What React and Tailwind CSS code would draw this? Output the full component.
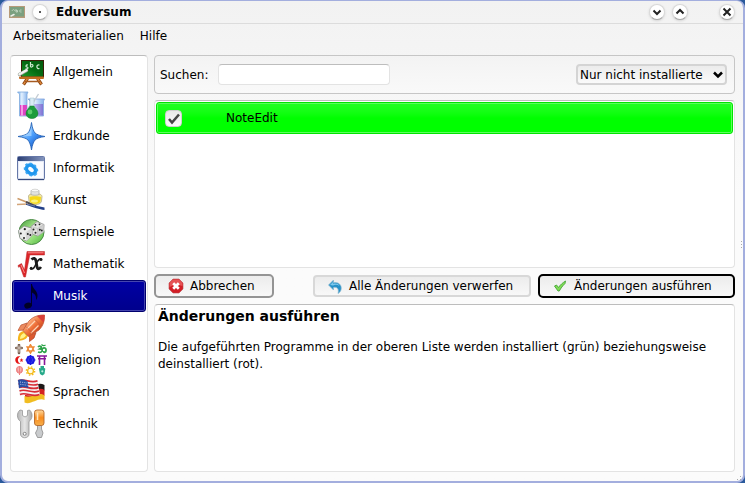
import React, { useState } from 'react';

function AppIcon({ className }) {
  return (
    <svg viewBox="0 0 18 16" className={className} aria-hidden="true">
      <rect x="1" y="2" width="16" height="12" fill="#b79a78" />
      <rect x="2" y="3" width="14" height="9.500" fill="#7ba07f" />
      <path d="M4 7 C5 5 6 5 7 7 M8 5 V8 H9.500 V6.500 H8 M13.500 6 C11 5.500 11 8.500 13.500 8" stroke="#c5d8c4" strokeWidth="0.900" fill="none" />
      <path d="M3 12 L6 10.500" stroke="#eeeeea" strokeWidth="1.500" strokeLinecap="round" />
    </svg>
  );
}

function BoardIcon({ className }) {
  return (
    <svg viewBox="0 0 32 32" className={className} aria-hidden="true">
      <defs>
        <linearGradient id="board" x1="0" y1="1" x2="1" y2="0">
          <stop offset="0" stopColor="#1c9a2a" />
          <stop offset="0.5" stopColor="#056b12" />
          <stop offset="1" stopColor="#035a0e" />
        </linearGradient>
      </defs>
      <path d="M12.500 22.500 L8.500 28.500 M22.500 22.500 L26.500 28.500" stroke="#8a4310" strokeWidth="3.200" fill="none" />
      <path d="M12.500 22.500 L8.700 28.200 M22.500 22.500 L26.300 28.200" stroke="#e08a3a" strokeWidth="1.500" fill="none" />
      <path d="M10 25.500 H25" stroke="#a65a20" strokeWidth="1.500" />
      <rect x="6" y="4" width="23" height="17.500" fill="#3b1d08" />
      <rect x="7" y="5" width="21" height="15.500" fill="url(#board)" />
      <rect x="4" y="20.500" width="25" height="2.500" rx="1" fill="#c06c20" />
      <g stroke="#cfe9d0" strokeWidth="1.200" fill="none">
        <path d="M13 9 C10.500 8.500 10.500 11 12 11 C13.800 11.200 13 13.500 10.500 12.800" />
        <path d="M15.500 6 V11 M15.500 9 C18.500 7 19 11.500 15.500 11" />
        <path d="M24.500 9 C21 8 21 13.500 24.500 12.500" />
      </g>
      <path d="M4.500 18.500 L11.500 14.500" stroke="#8b958b" strokeWidth="3.400" strokeLinecap="round" />
      <path d="M4.500 18.300 L11.500 14.300" stroke="#f4f5f2" strokeWidth="2.400" strokeLinecap="round" />
    </svg>
  );
}

function ChemistryIcon({ className }) {
  return (
    <svg viewBox="0 0 32 32" className={className} aria-hidden="true">
      <defs>
        <linearGradient id="glass" x1="0" y1="0" x2="1" y2="0">
          <stop offset="0" stopColor="#6aa4e4" />
          <stop offset="0.4" stopColor="#e2f0ff" />
          <stop offset="1" stopColor="#80aeea" />
        </linearGradient>
        <linearGradient id="violet" x1="0" y1="0" x2="1" y2="0">
          <stop offset="0" stopColor="#cfc8fa" />
          <stop offset="1" stopColor="#7f74d4" />
        </linearGradient>
      </defs>
      <path d="M2.500 4 H13 L12 6 V28 H4.500 V6 Z" fill="url(#glass)" stroke="#7ea9dd" strokeWidth="0.800" />
      <rect x="5" y="17" width="7" height="10.500" fill="#dd43c4" />
      <rect x="6" y="17" width="2" height="10.500" fill="#f59ae6" />
      <path d="M13 11 H29.500 L28.500 13 V28 H15 V13 Z" fill="url(#glass)" stroke="#83a5dd" strokeWidth="0.800" />
      <rect x="17" y="16" width="11" height="11.500" fill="url(#violet)" />
      <path d="M23.500 6 L18 15" stroke="#c3ccd4" strokeWidth="1.400" />
      <path d="M15 10 H19 V17 L22.500 22 H11.500 L15 17 Z" fill="#d9ecf5" stroke="#9dbccb" strokeWidth="0.500" />
      <path d="M15 18 H19 C20 20.500 23 22 23 25.500 C22.800 29 20 30.500 17 30.500 C14 30.500 11.200 29 11 25.500 C11 22 14 20.500 15 18 Z" fill="#1c9c3c" stroke="#0e7a2c" strokeWidth="0.500" />
      <circle cx="15" cy="24" r="2.400" fill="#6cd878" opacity="0.800" />
    </svg>
  );
}

function CompassIcon({ className }) {
  return (
    <svg viewBox="0 0 32 32" className={className} aria-hidden="true">
      <defs>
        <linearGradient id="star" x1="0" y1="0" x2="1" y2="1">
          <stop offset="0.200" stopColor="#9ad0ff" />
          <stop offset="0.500" stopColor="#4b9dfb" />
          <stop offset="0.800" stopColor="#1458c8" />
        </linearGradient>
      </defs>
      <path d="M16.500 2.500 C17.200 8 18.500 11 20 13 C22 14.800 25 15.800 30 16.500 C25 17.200 22 18.200 20 20 C18.500 22 17.200 25 16.500 30 C15.800 25 14.500 22 13 20 C11 18.200 8 17.200 3 16.500 C8 15.800 11 14.800 13 13 C14.500 11 15.800 8 16.500 2.500 Z" fill="url(#star)" stroke="#2a66b8" strokeWidth="0.900" />
      <path d="M16.500 6 C15.500 12 13 14.500 7 16.300 L16.500 16 Z" fill="#b9e0ff" opacity="0.600" />
    </svg>
  );
}

function ComputingIcon({ className }) {
  return (
    <svg viewBox="0 0 32 32" className={className} aria-hidden="true">
      <defs>
        <linearGradient id="titlebar" x1="0" y1="0" x2="1" y2="0">
          <stop offset="0" stopColor="#2c3f74" />
          <stop offset="1" stopColor="#8495bd" />
        </linearGradient>
      </defs>
      <rect x="2.500" y="4.500" width="27" height="23" rx="1" fill="#e4e9f6" stroke="#6678a8" />
      <rect x="3" y="5" width="26" height="4" fill="url(#titlebar)" />
      <rect x="4" y="10" width="24" height="16.500" fill="#fafbff" />
      <path d="M3 27.500 H29" stroke="#34477c" strokeWidth="1.300" />
      <g transform="rotate(40 16 17.500)">
        <ellipse cx="16" cy="17.500" rx="5" ry="3.800" fill="none" stroke="#1f96ee" strokeWidth="3.600" />
        <ellipse cx="16" cy="17.500" rx="7" ry="5.600" fill="none" stroke="#3ba6f4" strokeWidth="1.600" strokeDasharray="2.600 2.200" />
      </g>
    </svg>
  );
}

function ArtIcon({ className }) {
  return (
    <svg viewBox="0 0 32 32" className={className} aria-hidden="true">
      <path d="M13.500 12 C14 10 17 9.500 20.500 9.500 C24 9.500 27 10.500 27 12.500 L26.500 17 C26 20 23 20.500 20 20.500 C16.500 20.500 14 20 14 17 Z" fill="#f2e7a4" stroke="#b7ae83" strokeWidth="0.800" />
      <path d="M14.500 13 C17 12 23 12 26 13 L25.500 17 C25 19.500 22 19.800 20 19.800 C17 19.800 15 19 15 17 Z" fill="#f6d817" />
      <ellipse cx="19.500" cy="17" rx="3.500" ry="1.600" fill="#fdf37d" />
      <path d="M16 6.500 H24 V10.500 C22 11.500 18 11.500 16 10.500 Z" fill="#e2e3df" stroke="#a7a8a4" strokeWidth="0.700" />
      <ellipse cx="20" cy="6.500" rx="3.600" ry="1.300" fill="#f8f8f6" stroke="#b5b5b2" strokeWidth="0.500" />
      <path d="M2.500 14.500 L14 19" stroke="#cc9a68" strokeWidth="1.400" />
      <path d="M11 18 L21 22.500" stroke="#4a4a52" strokeWidth="2" />
      <path d="M2 20.500 L13 20" stroke="#d3a579" strokeWidth="1.400" />
      <path d="M11 19.500 L20 21.500 L29.500 23.500 L29.500 26 C24 25.500 19 23.500 11 20.800 Z" fill="#234089" />
      <path d="M12 20.200 L20 22" stroke="#8490b0" strokeWidth="0.800" />
    </svg>
  );
}

function DiceIcon({ className }) {
  return (
    <svg viewBox="0 0 32 32" className={className} aria-hidden="true">
      <defs>
        <linearGradient id="disc" x1="0" y1="0" x2="1" y2="1">
          <stop offset="0" stopColor="#3f9a36" />
          <stop offset="0.500" stopColor="#b4f096" />
          <stop offset="1" stopColor="#48b436" />
        </linearGradient>
      </defs>
      <circle cx="16.500" cy="16" r="12.500" fill="url(#disc)" stroke="#4a8a45" />
      <path d="M16 10.500 L22 5.500 L29 8.500 L28.500 16 L22.500 20 L16 17.500 Z" fill="#e2e2e0" stroke="#888" strokeWidth="0.700" />
      <path d="M16 10.500 L22.500 12.500 L22.500 20 L28.500 16 L29 8.500 L22.500 12.500" fill="#cfcfcf" stroke="#bbb" strokeWidth="0.600" />
      <path d="M3.500 14.500 L9 10 L16.500 12 L17.500 19 L11.500 25 L5 22.500 Z" fill="#ededec" stroke="#888" strokeWidth="0.700" />
      <path d="M10.500 16.500 L16.500 12 L17.500 19 L11.500 25 Z" fill="#d4d4d3" />
      <g fill="#222">
        <circle cx="9.800" cy="13.200" r="1.100" />
        <circle cx="5.800" cy="17.500" r="1" /><circle cx="9" cy="22" r="1" />
        <circle cx="12.800" cy="18" r="1" /><circle cx="15.300" cy="19" r="1" />
        <circle cx="20.500" cy="8.800" r="0.900" /><circle cx="24.500" cy="8.300" r="0.900" />
        <circle cx="18.500" cy="13.500" r="1" /><circle cx="20.500" cy="16.800" r="1" />
        <circle cx="24.800" cy="13.800" r="1" /><circle cx="26.800" cy="14.500" r="0.900" />
      </g>
    </svg>
  );
}

function MathIcon({ className }) {
  return (
    <svg viewBox="0 0 32 32" className={className} aria-hidden="true">
      <path d="M3 17.500 L6.500 15.500 L9.500 22 L12 3.500 H29.500 V7 H14.800 L10.500 29 H8.800 L5 18.500 L3.500 19.300 Z" fill="#dc2427" stroke="#b8282a" strokeWidth="0.500" />
      <path d="M12.800 4.800 H28.500 M6 17 L9.500 25" stroke="#fa8f8c" strokeWidth="1" fill="none" />
      <path d="M16.500 11.500 C18.500 9.500 20.500 10 21 13 L22 18.500 C22.500 21.500 24 21.500 26 19" stroke="#1b1b1b" strokeWidth="2.800" fill="none" />
      <path d="M26.500 11 C23.500 10 22.500 13.500 21 16 C19.500 19.500 18 22 15.500 20.500" stroke="#1b1b1b" strokeWidth="1.600" fill="none" />
      <circle cx="26" cy="11.500" r="1.500" fill="#1b1b1b" /><circle cx="16.200" cy="20.300" r="1.500" fill="#1b1b1b" />
    </svg>
  );
}

function NoteIcon({ className }) {
  return (
    <svg viewBox="0 0 32 32" className={className} aria-hidden="true">
      <ellipse cx="13" cy="25.600" rx="3.800" ry="2.900" transform="rotate(-18 13 25.600)" fill="#000026" />
      <path d="M16 4 H17 C17.500 9 23 11 22.500 16 C22.300 18 22 19 21 20 C21.500 15 19 13.500 17 12.500 V26 H16 Z" fill="#000026" />
    </svg>
  );
}

function RocketIcon({ className }) {
  return (
    <svg viewBox="0 0 32 32" className={className} aria-hidden="true">
      <defs>
        <linearGradient id="rocket" x1="0" y1="0" x2="1" y2="1">
          <stop offset="0.200" stopColor="#ffbd92" />
          <stop offset="0.500" stopColor="#f0743c" />
          <stop offset="0.800" stopColor="#c43a16" />
        </linearGradient>
      </defs>
      <path d="M3 29 C2.500 24 4 20 8.500 19 L13 24 C11 28 7 28.500 3 29 Z" fill="#f5b51c" />
      <path d="M5 27 C5 24 6.500 22 9 21 L11 23.500 C10 25.500 8 26.500 5 27 Z" fill="#fff58a" />
      <path d="M12 11 L6 13 L3 18.500 L9 18 Z" fill="#ec8a5e" stroke="#b9512e" strokeWidth="0.700" />
      <path d="M21 20.500 L19 26 L14.500 29.500 L14.500 23 Z" fill="#dc5a30" stroke="#ac3f20" strokeWidth="0.700" />
      <path d="M29.500 3 C29.500 9 28.500 13.500 24 18 L13.500 24.500 L8 18.500 L13.500 9.500 C18 4.500 23 3 29.500 3 Z" fill="url(#rocket)" stroke="#c05a36" strokeWidth="0.800" />
      <path d="M29.500 3 C29.500 6 29.300 8.500 28.500 10.500 L22 4 C24 3.200 26.500 3 29.500 3 Z" fill="#d8403a" />
      <path d="M12 17 L20 9 M16 21 L23.500 13.500" stroke="#ffd4b5" strokeWidth="1.300" />
      <path d="M20 7.500 L25.500 13.500 M11 14.500 L18 21.500" stroke="#c86040" strokeWidth="0.800" />
    </svg>
  );
}

function ReligionIcon({ className }) {
  return (
    <svg viewBox="0 0 32 32" className={className} aria-hidden="true">
      <path d="M4 1 V9 M1.300 4 H6.700" stroke="#776052" strokeWidth="2.600" strokeLinecap="round" />
      <path d="M4 1.500 V8.500 M1.500 4 H6.500" stroke="#e0d4cb" strokeWidth="0.900" />
      <path d="M15.500 0.500 L19 6.800 H12 Z M15.500 9.200 L12 3 H19 Z" fill="none" stroke="#ef8a35" strokeWidth="1.300" />
      <path d="M23 3 C25 1 28 3 25 4.800 C29 5 27 9.500 23 8 M27 5 C30 2.500 32 5 30.500 8 C29.500 9 28.500 8 28.500 7" stroke="#2ea34a" strokeWidth="1.700" fill="none" />
      <path d="M26.500 0.500 C28 2 29.500 2 30.500 0.800" stroke="#2ea34a" strokeWidth="1.200" fill="none" />
      <path d="M5.500 12.500 C-1.500 10.500 -1.500 21.500 5.500 19.500 C2 18.500 2 13.500 5.500 12.500 Z" fill="#e41616" />
      <path d="M6.500 14 L7 15.500 L8.500 15.500 L7.300 16.500 L7.800 18 L6.500 17.200 L5.200 18 L5.700 16.500 L4.600 15.500 L6 15.500 Z" fill="#e41616" />
      <circle cx="15.500" cy="16" r="3.600" fill="#5a5af4" stroke="#1717e0" strokeWidth="1.700" />
      <path d="M15.500 11 V21 M10.500 16 H20.500 M12.200 12.700 L18.800 19.300 M18.800 12.700 L12.200 19.300" stroke="#1717e0" strokeWidth="1.200" />
      <path d="M22 12 H32 M23 14.800 H31 M24.500 12 V21 M29.500 12 V21" stroke="#8a1799" strokeWidth="1.600" />
      <circle cx="4.500" cy="25.500" r="3" fill="#f6b0b0" stroke="#ee7f7f" strokeWidth="1" />
      <path d="M4.500 22 V31 M2 24.500 V28 C2.500 29.500 6.500 29.500 7 28 V24.500" stroke="#ee7f7f" strokeWidth="1" fill="none" />
      <circle cx="15.500" cy="27" r="2.900" fill="#fffbe6" stroke="#f3ba18" strokeWidth="1.300" />
      <circle cx="15.500" cy="27" r="4.200" fill="none" stroke="#f3ba18" strokeWidth="1.300" strokeDasharray="1.500 1.800" />
      <path d="M24 25 C24 23.500 25.300 23.800 25.500 24.500 V22 H29 V24.500 C29.500 23.500 30.500 24 30.200 25.500 L29.500 30 L27.300 31.500 L25 30 Z" fill="#27a98a" />
      <circle cx="27.300" cy="27.300" r="1.100" fill="#bff0e0" />
    </svg>
  );
}

function FlagsIcon({ className }) {
  return (
    <svg viewBox="0 0 32 32" className={className} aria-hidden="true">
      <path d="M10 10 C17 13 22 5 29.500 9 V14.500 C23 11 17 18 10 16 Z" fill="#1d1918" />
      <path d="M10 15 C17 18 23 10 29.500 14 V20 C23 17 16 24 10 21 Z" fill="#d32323" />
      <path d="M9.500 20 C17 23 23 15 29.500 19.500 V24 C23 21 16 29.500 9.500 26.500 Z" fill="#f1bd21" />
      <path d="M3 4.500 C10 1.500 15 8 22.500 4.500 L25 19 C17 22 12 16.500 5 20.500 Z" fill="#f5f2f2" />
      <g stroke="#d92d36" strokeWidth="1.700" fill="none">
        <path d="M3 4.800 C10 1.800 15 8 22.500 4.800" />
        <path d="M3.500 8.200 C10 5.200 15.500 11.400 23 8.200" />
        <path d="M4 11.600 C10 8.600 16 14.800 23.500 11.600" />
        <path d="M4.500 15 C11 12 16.500 18.200 24 15" />
        <path d="M5 18.500 C11 15.500 17 21.700 24.500 18.500" />
      </g>
      <path d="M3 4 C7 2.300 9.500 3.800 12.500 5 L13.500 12 C10 11 7.500 10.500 4 12.300 Z" fill="#284ea5" />
      <path d="M5 6 L12 7 M5.300 8.300 L12.500 9.300" stroke="#c9d8f6" strokeWidth="0.900" strokeDasharray="1 1.200" />
    </svg>
  );
}

function ToolsIcon({ className }) {
  return (
    <svg viewBox="0 0 32 32" className={className} aria-hidden="true">
      <defs>
        <linearGradient id="steel" x1="0" y1="0" x2="1" y2="0">
          <stop offset="0" stopColor="#b4b4b4" />
          <stop offset="0.500" stopColor="#e6e6e6" />
          <stop offset="1" stopColor="#a8a8a8" />
        </linearGradient>
        <linearGradient id="handle" x1="0" y1="0" x2="0" y2="1">
          <stop offset="0" stopColor="#ffdaa0" />
          <stop offset="0.500" stopColor="#f88c1e" />
          <stop offset="1" stopColor="#f6b04d" />
        </linearGradient>
      </defs>
      <path d="M5 2 C1.500 5 1.500 10.500 5.500 13.500 V26 C5.500 31 14 31 14 26 V13.500 C18 10.500 18 5 14.500 2 L12.500 2.500 V7.500 L10 9 L7.500 7.500 V2.500 Z" fill="url(#steel)" stroke="#959595" strokeWidth="0.800" />
      <circle cx="9.700" cy="25.800" r="1.500" fill="#fff" stroke="#777" strokeWidth="0.900" />
      <path d="M22.500 17 H26.500 V21 L28 25 L26.500 29.500 H22.500 L20.500 25 L22.500 21 Z" fill="#c9cbcd" stroke="#8a8a8a" strokeWidth="0.800" />
      <rect x="19.500" y="2" width="9.500" height="15.500" rx="2.500" fill="url(#handle)" stroke="#b3662a" strokeWidth="0.900" />
      <path d="M22.500 4.500 V12" stroke="#ffe5bd" strokeWidth="1.600" />
    </svg>
  );
}

const categories = [
  ['Allgemein', BoardIcon],
  ['Chemie', ChemistryIcon],
  ['Erdkunde', CompassIcon],
  ['Informatik', ComputingIcon],
  ['Kunst', ArtIcon],
  ['Lernspiele', DiceIcon],
  ['Mathematik', MathIcon],
  ['Musik', NoteIcon],
  ['Physik', RocketIcon],
  ['Religion', ReligionIcon],
  ['Sprachen', FlagsIcon],
  ['Technik', ToolsIcon],
];

function TitleButton({ label, children }) {
  return (
    <button type="button" aria-label={label} className="flex size-4 items-center justify-center rounded-full border border-[#d9d9d9] border-b-[#a8a8a8] bg-white shadow-sm">
      <svg viewBox="0 0 10 10" className="size-2.5" fill="none" stroke="#222" strokeWidth="2" aria-hidden="true">{children}</svg>
    </button>
  );
}

function TitleBar() {
  return (
    <header className="flex h-[23px] items-center border-b border-[#dcdcdc] pr-2 pl-1.5">
      <AppIcon className="h-4 w-[18px]" />
      <span className="ml-1.5 flex">
        <TitleButton label="Fenstermenü">
          <circle cx="5" cy="5" r="1" fill="#222" stroke="none" />
        </TitleButton>
      </span>
      <h1 className="ml-2 text-[12px] font-bold">Eduversum</h1>
      <div className="ml-auto flex gap-[7px]">
        <TitleButton label="Minimieren"><path d="M1.500 3.500 L5 7 L8.500 3.500" /></TitleButton>
        <TitleButton label="Maximieren"><path d="M1.500 6.500 L5 3 L8.500 6.500" /></TitleButton>
        <span className="ml-6 flex">
          <TitleButton label="Schließen"><path d="M1.500 1.500 L8.500 8.500 M8.500 1.500 L1.500 8.500" /></TitleButton>
        </span>
      </div>
    </header>
  );
}

const sunken = 'rounded-[4px] border border-[#e3e3e3] border-t-[#bdbdbd] bg-white';
const raised = 'flex items-center gap-1.5 bg-gradient-to-b from-[#ececec] to-[#f8f8f8] pl-3';

export default function App() {
  const [selected, setSelected] = useState('Musik');
  const [checked, setChecked] = useState(true);
  return (
    <div className="min-h-screen bg-[#2a5a9c]">
      <div className="relative flex min-h-screen flex-col rounded-lg border-x-2 border-t border-b-2 border-[#a3aede] bg-gradient-to-b from-[#f2f2f2] to-[#fbfbfb] to-40% font-['DejaVu_Sans',sans-serif] text-[12px] text-black">
        <TitleBar />
        <nav className="flex h-[31px] items-center gap-4 px-[11px] pb-2">
          <button type="button">Arbeitsmaterialien</button>
          <button type="button">Hilfe</button>
        </nav>
        <main className="flex flex-1 gap-1.5 pr-2 pb-[9px] pl-2">
          <ul className={`w-[138px] shrink-0 px-px ${sunken}`}>
            {categories.map(([name, Icon]) => (
              <li key={name}>
                <button
                  type="button"
                  onClick={() => setSelected(name)}
                  className={
                    name === selected
                      ? 'flex h-8 w-full items-center gap-1.5 rounded-[3px] border border-[#00006e] bg-gradient-to-b from-[#0000a4] to-[#00008c] pl-0.5 text-white inset-ring inset-ring-[#4545ae]'
                      : 'flex h-8 w-full items-center gap-1.5 border border-transparent pl-0.5'
                  }
                >
                  <Icon className="size-8 shrink-0" />
                  {name}
                </button>
              </li>
            ))}
          </ul>
          <div className="flex min-w-0 flex-1 flex-col gap-1.5">
            <section className="flex h-[39px] items-center rounded-[4px] border border-[#c6c6c6] bg-gradient-to-b from-[#f3f3f3] to-[#f9f9f9] pr-[7px] pl-[5px]">
              <label htmlFor="search" className="w-[58px] shrink-0">Suchen:</label>
              <input id="search" type="text" className={`h-[21px] w-[172px] px-1 outline-none ${sunken}`} />
              <div className="relative ml-auto">
                <select aria-label="Filter" className="block h-[21px] w-[151px] appearance-none rounded-[4px] border-2 border-[#d4d4d4] bg-gradient-to-b from-[#ececec] to-[#fafafa] pl-0.5">
                  <option>Nur nicht installierte</option>
                </select>
                <svg viewBox="0 0 10 8" className="pointer-events-none absolute top-[7px] right-1 h-2 w-2.5" fill="none" stroke="#000" strokeWidth="2.500" aria-hidden="true">
                  <path d="M1 1.500 L5 5.500 L9 1.500" />
                </svg>
              </div>
            </section>
            <section className={`min-h-[100px] flex-1 p-px ${sunken}`}>
              <label className="flex h-8 items-center rounded-[3px] border border-[#00e400] bg-gradient-to-b from-[#22ff22] to-[#00ff00] to-50% pl-2 inset-ring inset-ring-[#5cff5c]">
                <span className="relative flex">
                  <input type="checkbox" checked={checked} onChange={() => setChecked(!checked)} className="size-[17px] appearance-none rounded-[4px] border border-[#cfcfcf] bg-gradient-to-b from-[#e9e9e9] to-[#fafafa]" />
                  {checked && (
                    <svg viewBox="0 0 17 17" className="pointer-events-none absolute inset-0 size-full" fill="none" stroke="#444" strokeWidth="2.500" aria-hidden="true">
                      <path d="M4 9 L7 12.500 L14 4.500" />
                    </svg>
                  )}
                </span>
                <span className="ml-11">NoteEdit</span>
              </label>
            </section>
            <div className="flex h-6 gap-[7px]">
              <button type="button" className={`mr-auto w-[120px] rounded-[5px] border-2 border-[#949494] ${raised}`}>
                <svg viewBox="0 0 16 16" className="size-4" aria-hidden="true">
                  <path d="M5 1 H11 L15 5 V11 L11 15 H5 L1 11 V5 Z" fill="#d21f26" stroke="#b84a4e" strokeWidth="0.600" />
                  <path d="M5 1.500 H11 L14.500 5 V8 C10 6 5 7 1.500 9 V5 Z" fill="#ee6a6a" opacity="0.700" />
                  <path d="M5.200 5.200 L10.800 10.800 M10.800 5.200 L5.200 10.800" stroke="#fff" strokeWidth="2.700" />
                </svg>
                Abbrechen
              </button>
              <button type="button" className={`my-px w-[218px] rounded-[4px] border-2 border-[#d8d8d8] ${raised}`}>
                <svg viewBox="0 0 16 16" className="size-4" aria-hidden="true">
                  <path d="M1.500 7 L6.500 2 V4.800 C11 3.500 15.500 7 14 12 C13.500 13.500 12.500 14.500 11 15.500 C12 12 11 8.500 6.500 9.500 V12 Z" fill="#2590c8" stroke="#8db9d0" strokeWidth="0.700" />
                  <path d="M3 7 L6 4 V5.800 C9 5 11.500 5.500 12.500 8 C10.500 6.500 8 6.500 6 7.500 Z" fill="#7cc8ec" />
                </svg>
                Alle Änderungen verwerfen
              </button>
              <button type="button" className={`w-[197px] rounded-[5px] border-2 border-black ${raised}`}>
                <svg viewBox="0 0 16 16" className="size-4" aria-hidden="true">
                  <path d="M2.500 8 L4.500 7 L6.500 9.500 C8.500 6.500 10.500 5 13.500 3 L13 5.500 C10.500 8 9 10 7.300 13 H6 Z" fill="#80dc55" stroke="#45a537" strokeWidth="0.900" />
                </svg>
                Änderungen ausführen
              </button>
            </div>
            <section className={`min-h-[100px] flex-1 px-[3px] pt-0.5 ${sunken}`}>
              <h2 className="text-[14px] leading-[18px] font-bold">Änderungen ausführen</h2>
              <p className="mt-3.5 leading-[17px]">
                Die aufgeführten Programme in der oberen Liste werden installiert (grün) beziehungsweise deinstalliert (rot).
              </p>
            </section>
          </div>
        </main>
        <svg viewBox="0 0 6 6" className="absolute right-0 bottom-0 size-1.5" fill="#aaa" aria-hidden="true">
          <path d="M0 4 h1 v1 h-1 Z M3 4 h1 v1 h-1 Z M3 1 h1 v1 h-1 Z" />
        </svg>
        <svg viewBox="0 0 2 8" className="absolute top-1/2 right-0 h-2 w-0.5" fill="#aaa" aria-hidden="true">
          <path d="M0 0 h1 v1 h-1 Z M0 3 h1 v1 h-1 Z M0 6 h1 v1 h-1 Z" />
        </svg>
      </div>
    </div>
  );
}
